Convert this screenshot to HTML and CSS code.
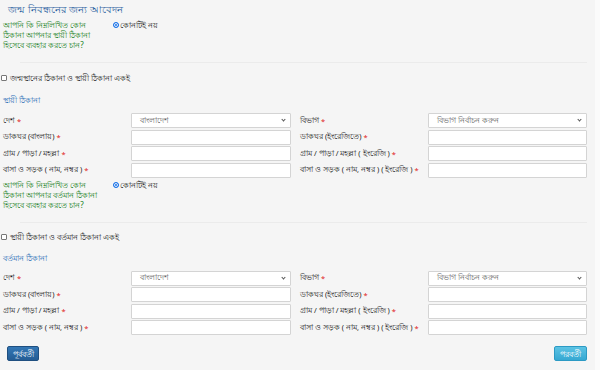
FILE: index.html
```html
<!DOCTYPE html>
<html lang="bn">
<head>
<meta charset="utf-8">
<link rel="stylesheet" href="styles.css">
</head>
<body>
<div class="page">
  <h3 class="title">জন্ম নিবন্ধনের জন্য আবেদন</h3>

  <div class="question">
    <p class="q-text">আপনি কি নিম্নলিখিত কোন ঠিকানা আপনার স্থায়ী ঠিকানা হিসেবে ব্যবহার করতে চান?</p>
    <label class="radio"><span class="dot"></span>কোনটিই নয়</label>
  </div>

  <hr class="sep">

  <label class="check"><span class="box"></span>জন্মস্থানের ঠিকানা ও স্থায়ী ঠিকানা একই</label>

  <h4 class="section">স্থায়ী ঠিকানা</h4>

  <div class="grid">
    <div class="lbl">দেশ <span class="req">*</span></div>
    <div class="field select">বাংলাদেশ<span class="chev"></span></div>
    <div class="lbl">বিভাগ <span class="req">*</span></div>
    <div class="field select">বিভাগ নির্বাচন করুন<span class="chev"></span></div>

    <div class="lbl">ডাকঘর (বাংলায়) <span class="req">*</span></div>
    <div class="field"></div>
    <div class="lbl">ডাকঘর (ইংরেজিতে) <span class="req">*</span></div>
    <div class="field"></div>

    <div class="lbl">গ্রাম / পাড়া / মহল্লা <span class="req">*</span></div>
    <div class="field"></div>
    <div class="lbl">গ্রাম / পাড়া / মহল্লা ( ইংরেজি ) <span class="req">*</span></div>
    <div class="field"></div>

    <div class="lbl">বাসা ও সড়ক ( নাম, নম্বর ) <span class="req">*</span></div>
    <div class="field"></div>
    <div class="lbl">বাসা ও সড়ক ( নাম, নম্বর ) ( ইংরেজি ) <span class="req">*</span></div>
    <div class="field"></div>
  </div>

  <div class="question q2">
    <p class="q-text">আপনি কি নিম্নলিখিত কোন ঠিকানা আপনার বর্তমান ঠিকানা হিসেবে ব্যবহার করতে চান?</p>
    <label class="radio"><span class="dot"></span>কোনটিই নয়</label>
  </div>

  <hr class="sep">

  <label class="check"><span class="box"></span>স্থায়ী ঠিকানা ও বর্তমান ঠিকানা একই</label>

  <h4 class="section">বর্তমান ঠিকানা</h4>

  <div class="grid">
    <div class="lbl">দেশ <span class="req">*</span></div>
    <div class="field select">বাংলাদেশ<span class="chev"></span></div>
    <div class="lbl">বিভাগ <span class="req">*</span></div>
    <div class="field select">বিভাগ নির্বাচন করুন<span class="chev"></span></div>

    <div class="lbl">ডাকঘর (বাংলায়) <span class="req">*</span></div>
    <div class="field"></div>
    <div class="lbl">ডাকঘর (ইংরেজিতে) <span class="req">*</span></div>
    <div class="field"></div>

    <div class="lbl">গ্রাম / পাড়া / মহল্লা <span class="req">*</span></div>
    <div class="field"></div>
    <div class="lbl">গ্রাম / পাড়া / মহল্লা ( ইংরেজি ) <span class="req">*</span></div>
    <div class="field"></div>

    <div class="lbl">বাসা ও সড়ক ( নাম, নম্বর ) <span class="req">*</span></div>
    <div class="field"></div>
    <div class="lbl">বাসা ও সড়ক ( নাম, নম্বর ) ( ইংরেজি ) <span class="req">*</span></div>
    <div class="field"></div>
  </div>

  <div class="actions">
    <button class="btn prev">পূর্ববর্তী</button>
    <button class="btn next">পরবর্তী</button>
  </div>
</div>
</body>
</html>
```

FILE: styles.css
```css
* { box-sizing: border-box; }
html, body {
  margin: 0;
  padding: 0;
  background: #fbfbfb;
}
body {
  font-family: "Noto Sans", "DejaVu Sans", sans-serif;
  font-size: 8px;
  color: #333;
}
.page {
  width: 595px;
  height: 370px;
  background: #f5f5f5;
  padding: 2px 8px 0 3px;
}
.title {
  margin: 0 0 0 5px;
  font-size: 10px;
  line-height: 14px;
  font-weight: normal;
  color: #2a5f9e;
}
.question {
  display: flex;
  align-items: flex-start;
  margin-top: 4px;
}
.q-text {
  margin: 0;
  width: 110px;
  color: #17801a;
  font-size: 8px;
  line-height: 10px;
  padding-right: 8px;
}
.radio {
  display: flex;
  align-items: center;
  gap: 1px;
  font-size: 7.5px;
  line-height: 10px;
  color: #222;
}
.dot {
  width: 6px;
  height: 6px;
  border-radius: 50%;
  border: 1.5px solid #1a73e8;
  box-shadow: inset 0 0 0 1px #fff;
  background: #1a73e8;
}
.sep {
  margin: 12px 0 0 17px;
  border: 0;
  border-top: 1px solid #ebebeb;
}
.check {
  display: flex;
  align-items: center;
  gap: 3px;
  margin: 10px 0 0 -2px;
  font-size: 7.5px;
  line-height: 10px;
  color: #222;
}
.box {
  width: 6px;
  height: 6px;
  border: 1px solid #777;
  border-radius: 1px;
  background: #fff;
}
.section {
  margin: 12px 0 0 0;
  font-size: 7.5px;
  line-height: 10px;
  font-weight: normal;
  color: #2a6db5;
}
.grid {
  display: grid;
  grid-template-columns: 128px 160px 137px 159px;
  row-gap: 1.5px;
  margin-top: 8px;
}
.grid .lbl:nth-child(4n+3) {
  padding-left: 9px;
}
.lbl {
  height: 15px;
  display: flex;
  align-items: center;
  font-size: 7.5px;
  color: #222;
  white-space: nowrap;
}
.req { color: #e02020; margin-left: 2px; }
.field {
  height: 15px;
  background: #fff;
  border: 1px solid #d4d4d4;
  border-radius: 1px;
}
.select {
  position: relative;
  display: flex;
  align-items: center;
  padding-left: 8px;
  font-size: 7.5px;
  color: #666;
}
.chev {
  position: absolute;
  right: 5px;
  top: 4px;
  width: 3px;
  height: 3px;
  border-right: 1px solid #555;
  border-bottom: 1px solid #555;
  transform: rotate(45deg);
}
.q2 { margin-top: 2px; }
.q2 + .sep { margin-top: 12px; }
.q2 ~ .check { margin-top: 9px; }
.q2 ~ .section { margin-top: 11px; }
.actions {
  display: flex;
  justify-content: space-between;
  margin-top: 11px;
  padding: 0 0 0 4px;
}
.btn {
  height: 15px;
  padding: 0 4px;
  font-family: inherit;
  font-size: 7.5px;
  color: #fff;
  border-radius: 2px;
  border: 1px solid transparent;
  line-height: 12px;
}
.prev {
  width: 32px;
  background: linear-gradient(#3377b5, #255d95);
  border-color: #1f4f80;
}
.next {
  width: 33px;
  background: linear-gradient(#5cc3e4, #36a8d2);
  border-color: #2c9ac4;
}
```
